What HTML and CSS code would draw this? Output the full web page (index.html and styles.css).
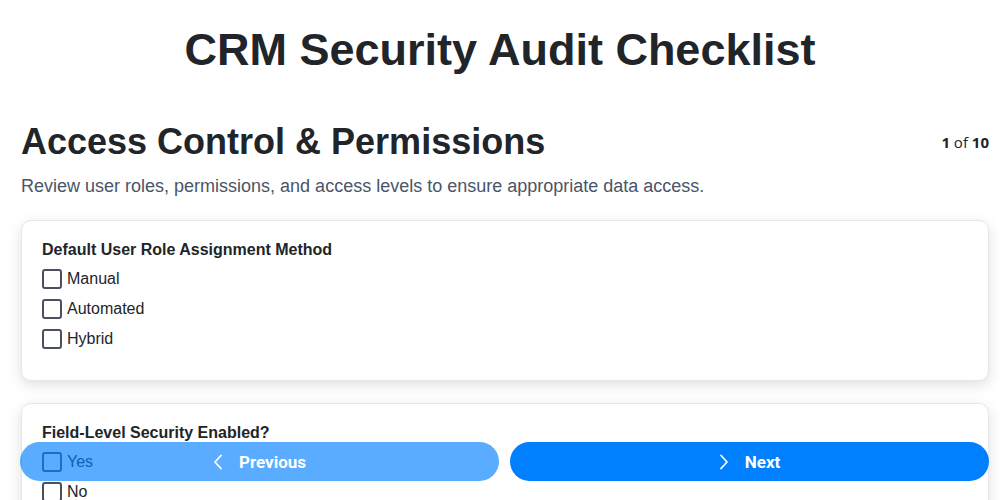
FILE: index.html
```html
<!DOCTYPE html>
<html lang="en">
<head>
    <meta charset="UTF-8">
    <meta name="viewport" content="width=device-width, initial-scale=1.0">
    <title>CRM Security Audit Checklist</title>
    <link rel="stylesheet" href="styles.css">
</head>
<body>
    <div class="audit-container">
        <h1>CRM Security Audit Checklist</h1>

        <div class="section-header">
            <h2>Access Control &amp; Permissions</h2>
            <div class="step-count"><b>1</b> of <b>10</b></div>
        </div>
        <p class="section-desc">Review user roles, permissions, and access levels to ensure appropriate data access.</p>

        <div class="question-card">
            <div class="question-label">Default User Role Assignment Method</div>
            <label class="option"><span class="box"></span>Manual</label>
            <label class="option"><span class="box"></span>Automated</label>
            <label class="option"><span class="box"></span>Hybrid</label>
        </div>

        <div class="question-card">
            <div class="question-label">Field-Level Security Enabled?</div>
            <label class="option"><span class="box"></span>Yes</label>
            <label class="option"><span class="box"></span>No</label>
        </div>
    </div>

    <div class="nav-buttons">
        <button class="nav-btn prev" disabled>
            <svg width="10" height="16" viewBox="0 0 10 16"><path d="M8 1.5 L2 8 L8 14.5" fill="none" stroke="#fff" stroke-width="1.8" stroke-linecap="round" stroke-linejoin="round"/></svg>
            Previous
        </button>
        <button class="nav-btn next">
            <svg width="10" height="16" viewBox="0 0 10 16"><path d="M2 1.5 L8 8 L2 14.5" fill="none" stroke="#fff" stroke-width="1.8" stroke-linecap="round" stroke-linejoin="round"/></svg>
            Next
        </button>
    </div>
</body>
</html>
```

FILE: styles.css
```css
* {
    margin: 0;
    padding: 0;
    box-sizing: border-box;
}

body {
    background: #fff;
    color: #212529;
    font-family: 'Liberation Sans', Arial, sans-serif;
    overflow: hidden;
}

.audit-container {
    padding: 23px 11px 0 21px;
}

h1 {
    font-size: 45px;
    text-align: center;
    color: #212529;
    line-height: 54px;
    margin: 0 0 43px -10px;
}

.section-header {
    display: flex;
    justify-content: space-between;
    align-items: center;
}

h2 {
    font-size: 36px;
    line-height: 44px;
    color: #212529;
}

.step-count {
    font-family: 'Open Sans', sans-serif;
    font-size: 15px;
    color: #212529;
}

.section-desc {
    font-size: 18px;
    color: #4a5568;
    margin: 12px 0 23px;
}

.question-card {
    background: #fff;
    border: 1px solid #e5e7eb;
    border-radius: 10px;
    box-shadow: 0 4px 14px rgba(0, 0, 0, 0.13);
    padding: 20px 20px 26px;
    margin-bottom: 22px;
}

.question-label {
    font-weight: bold;
    font-size: 16px;
    margin-bottom: 5px;
}

.option {
    display: flex;
    align-items: center;
    gap: 5px;
    font-size: 16px;
    height: 30px;
    color: #212529;
}

.box {
    width: 20px;
    height: 20px;
    border: 2px solid #4a5060;
    border-radius: 3px;
}

.nav-buttons {
    position: fixed;
    left: 20px;
    right: 11px;
    bottom: 19px;
    display: flex;
    gap: 11px;
}

.nav-btn {
    flex: 1;
    height: 39px;
    border: none;
    border-radius: 20px;
    background: #0080ff;
    color: #fff;
    font-family: Roboto, sans-serif;
    font-weight: bold;
    font-size: 17px;
    display: flex;
    align-items: center;
    justify-content: center;
    gap: 16px;
}

.nav-btn:disabled {
    opacity: 0.65;
}
```
